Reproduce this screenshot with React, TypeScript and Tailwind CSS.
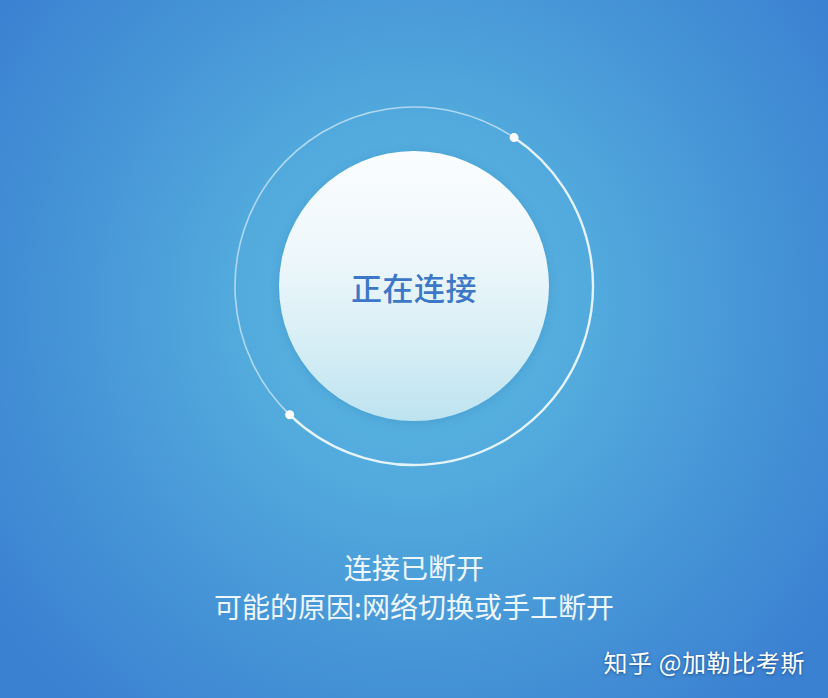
import React from "react";

const CJK = { fontFamily: '"Noto Sans CJK SC", "Noto Sans", sans-serif' };

function OrbitRing() {
  // two arcs meeting at the marker dots: a brighter trailing arc and a faint leading one
  return (
    <svg width="364" height="364" viewBox="0 0 364 364" className="absolute inset-0">
      <path
        d="M57.7 310.8 A179 179 0 0 1 282.1 33.6"
        fill="none"
        stroke="rgba(255,255,255,0.55)"
        strokeWidth="1.6"
      />
      <path
        d="M282.1 33.6 A179 179 0 1 1 57.7 310.8"
        fill="none"
        stroke="rgba(255,255,255,0.85)"
        strokeWidth="2.4"
      />
      <circle cx="282.1" cy="33.6" r="4.5" fill="#ffffff" />
      <circle cx="57.7" cy="310.8" r="4.5" fill="#ffffff" />
    </svg>
  );
}

export default function App() {
  return (
    <div
      className="w-[828px] h-[698px] overflow-hidden flex flex-col items-center bg-[radial-gradient(ellipse_62%_75%_at_50%_44%,#5bb9e0_0%,#52aadd_35%,#4593d6_70%,#3b81d2_100%)]"
      style={CJK}
    >
      <div className="relative mt-[104px] w-[364px] h-[364px] flex items-center justify-center">
        <OrbitRing />
        <div className="w-[270px] h-[270px] rounded-full flex items-center justify-center bg-[linear-gradient(180deg,#fbfdfe_0%,#edf7fb_40%,#d4edf5_75%,#bde3f0_100%)] shadow-[0_2px_10px_rgba(40,110,170,0.25)]">
          <span className="text-[31px] leading-none font-medium text-[#3d77c7] tracking-[0.5px] mt-[1px]">
            正在连接
          </span>
        </div>
      </div>

      <div className="mt-[80px] flex flex-col items-center text-[#eef7fd] text-[28px] leading-[39px]">
        <span>连接已断开</span>
        <span>可能的原因:网络切换或手工断开</span>
      </div>

      <div className="mt-auto mb-[20px] self-end mr-[23px] text-white text-[24px] leading-[32px] tracking-[0.6px] [text-shadow:0_1px_3px_rgba(0,40,90,0.55)]">
        知乎 @加勒比考斯
      </div>
    </div>
  );
}
